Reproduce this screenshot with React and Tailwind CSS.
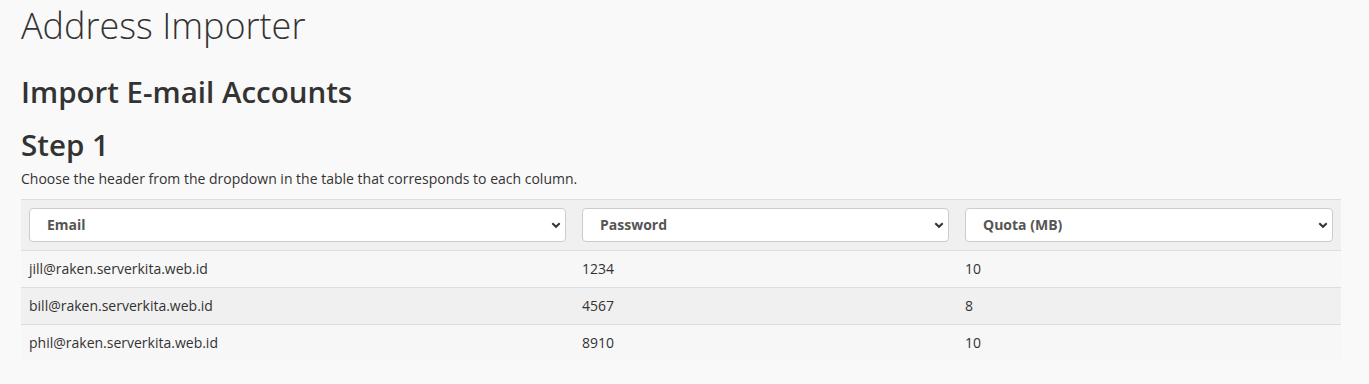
import React from "react";

const Chevron = () => (
  <svg width="10" height="10" viewBox="0 0 10 10" className="absolute right-[4px] top-[11px]">
    <path d="M1.3 3.2 L5 6.8 L8.7 3.2" fill="none" stroke="#333" strokeWidth="2" />
  </svg>
);

const Sel = ({ label }) => (
  <div className="relative h-[34px] w-full rounded-[4px] border border-[#cccccc] bg-white">
    <span className="absolute left-[17px] top-[5px] text-[14px] font-bold text-[#555555]">{label}</span>
    <Chevron />
  </div>
);

const rows = [
  ["jill@raken.serverkita.web.id", "1234", "10"],
  ["bill@raken.serverkita.web.id", "4567", "8"],
  ["phil@raken.serverkita.web.id", "8910", "10"],
];

export default function App() {
  return (
    <div className="min-h-[384px] bg-[#f9f9f9] px-[21px] text-[#333333]" style={{ fontFamily: '"Open Sans", sans-serif' }}>
      <h1 className="pt-[4px] text-[36px] font-light leading-[44px]">Address Importer</h1>
      <h2 className="mt-[27px] text-[29.5px] font-semibold leading-[34px]">Import E-mail Accounts</h2>
      <h3 className="mt-[19px] text-[29.5px] font-semibold leading-[34px]">Step 1</h3>
      <p className="mt-[7px] text-[14px] leading-[20px]">Choose the header from the dropdown in the table that corresponds to each column.</p>
      <div className="mt-[10px] w-[1320px] border-t border-[#dddddd]">
        <div className="grid grid-cols-[553px_383px_384px] bg-[#f0f0f0]">
          <div className="p-[8px]"><Sel label="Email" /></div>
          <div className="p-[8px]"><Sel label="Password" /></div>
          <div className="p-[8px]"><Sel label="Quota (MB)" /></div>
        </div>
        {rows.map((r, i) => (
          <div key={i} className={`grid grid-cols-[553px_383px_384px] border-t border-[#dddddd] text-[14px] leading-[20px] ${i === 1 ? "bg-[#f0f0f0]" : "bg-[#f7f7f7]"}`}>
            {r.map((c, j) => (
              <div key={j} className="px-[8px] py-[8px]">{c}</div>
            ))}
          </div>
        ))}
      </div>
    </div>
  );
}
